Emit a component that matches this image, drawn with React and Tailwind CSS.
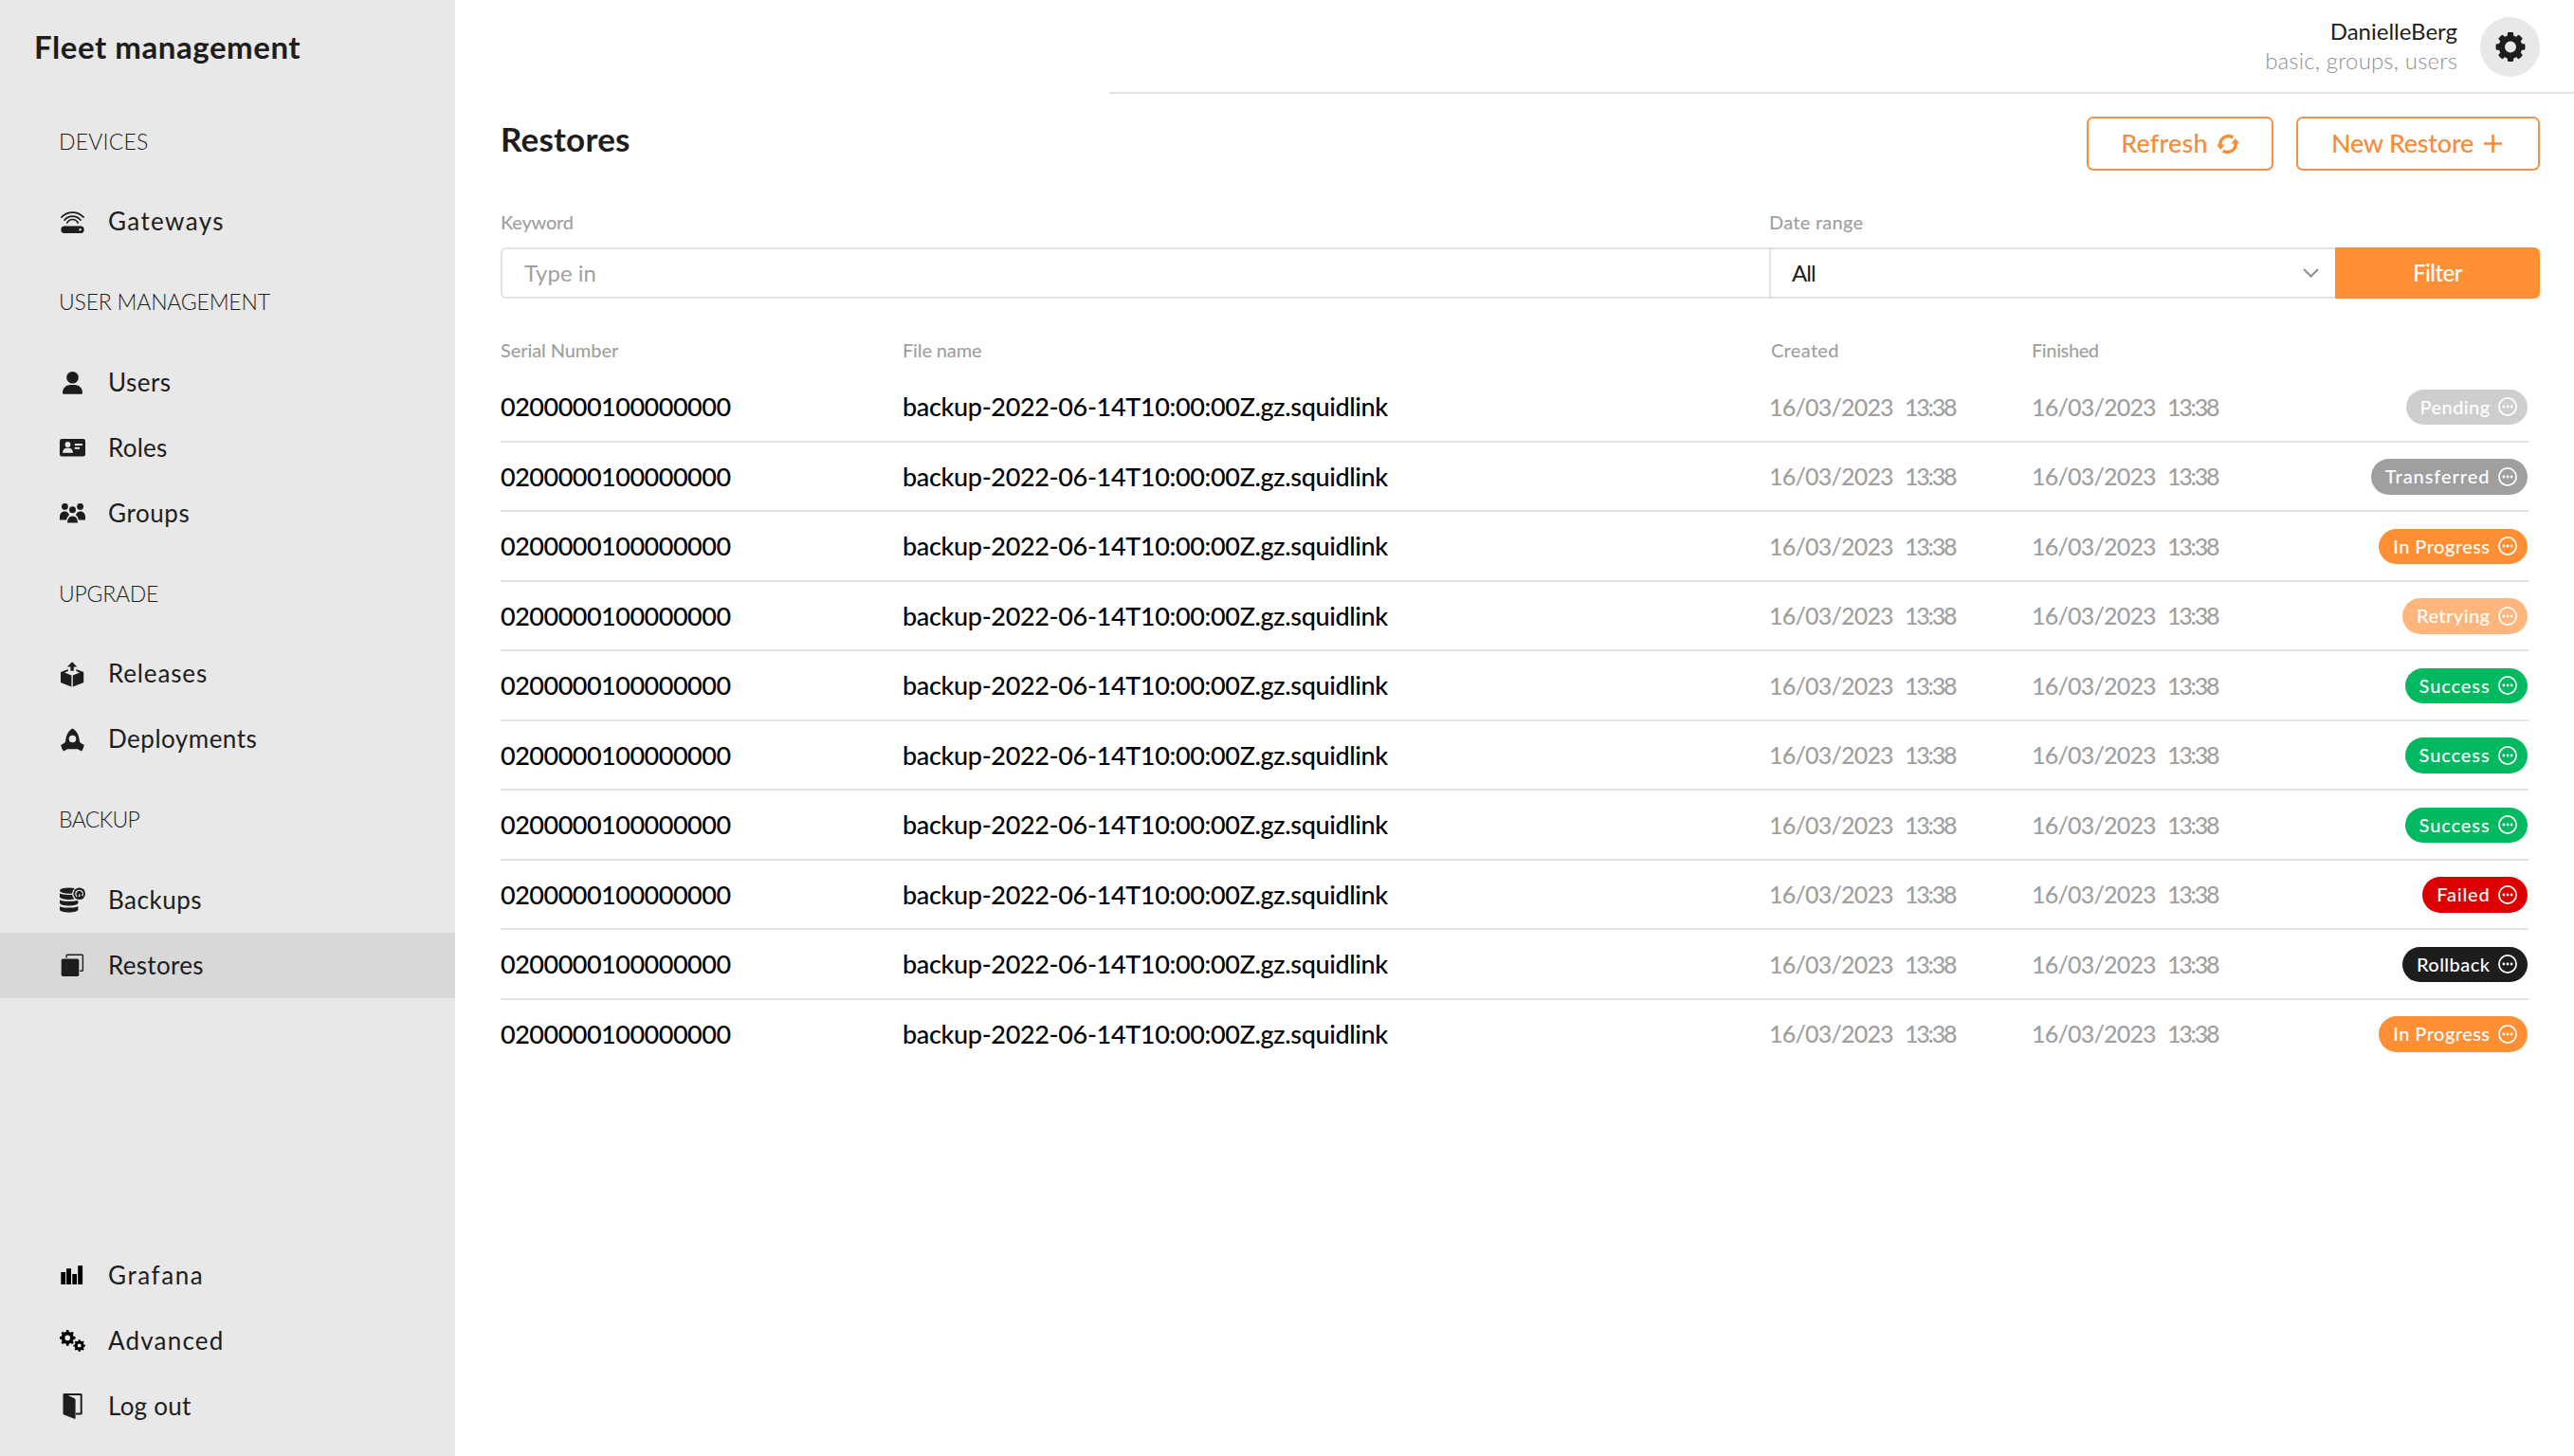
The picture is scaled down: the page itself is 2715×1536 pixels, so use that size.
import React from "react";
import clsx from "clsx";

function Icon({ children }) {
  return (
    <svg viewBox="0 0 27 27" className="h-[27px] w-[27px] shrink-0" fill="currentColor">
      {children}
    </svg>
  );
}

const ANGLES = [0, 45, 90, 135, 180, 225, 270, 315];

function Cog({ cx, cy, r, hole, tooth }) {
  const body = r * 0.8;
  return (
    <g>
      <circle cx={cx} cy={cy} r={(body + hole) / 2} fill="none" stroke="currentColor" strokeWidth={body - hole} />
      {ANGLES.map((a) => (
        <rect
          key={a}
          x={cx - tooth / 2}
          y={cy - r}
          width={tooth}
          height={r * 0.4}
          rx={tooth * 0.2}
          transform={`rotate(${a} ${cx} ${cy})`}
        />
      ))}
    </g>
  );
}

const GatewayIcon = () => (
  <Icon>
    <g fill="none" stroke="currentColor" strokeWidth="1.7" strokeLinecap="round">
      <path d="M1.9 8.2C8.2 1.4 18.8 1.4 25.1 8.2" />
      <path d="M4.9 11.2C9.6 5.7 17.4 5.7 22.1 11.2" />
      <path d="M7.8 14C10.4 9.3 16.6 9.3 19.2 14" />
    </g>
    <path
      fillRule="evenodd"
      d="M4.6 17.4h17.8a3.6 3.6 0 0 1 3.2 3.8 3.6 3.6 0 0 1-3.2 3.8H4.6a3.6 3.6 0 0 1-3.2-3.8 3.6 3.6 0 0 1 3.2-3.8Zm17 2.6a1.3 1.3 0 1 0 0 2.6 1.3 1.3 0 0 0 0-2.6Z"
    />
  </Icon>
);

const UserIcon = () => (
  <Icon>
    <circle cx="13.5" cy="8.2" r="6.3" />
    <path d="M3 24.6c0-5 3.6-8.5 8.2-8.5h4.6c4.6 0 8.2 3.5 8.2 8.5 0 .7-.4 1.2-1.1 1.2H4.1c-.7 0-1.1-.5-1.1-1.2Z" />
  </Icon>
);

const RolesIcon = () => (
  <Icon>
    <rect x="0" y="4" width="27" height="18.4" rx="2.2" />
    <g className="fill-[#e8e8e8]">
      <circle cx="8.5" cy="10" r="2.9" />
      <path d="M3 18.8c0-3 2-5 4-5h3c2 0 4 2 4 5Z" />
      <rect x="15.6" y="9" width="8.6" height="2" rx="0.8" />
      <rect x="15.6" y="12.7" width="5.6" height="2" rx="0.8" />
    </g>
  </Icon>
);

const GroupsIcon = () => (
  <Icon>
    <circle cx="5.4" cy="6.4" r="3.4" />
    <circle cx="21.6" cy="6.4" r="3.4" />
    <circle cx="13.5" cy="9.8" r="3.5" />
    <path d="M0 20.4V17c0-3.2 2.2-5.6 5-5.6 1.7 0 3 .6 3.9 1.6.4 1 .7 1.7 1.2 2.2-1.5 1.1-2.6 2.9-3 5.2Z" />
    <path d="M27 20.4V17c0-3.2-2.2-5.6-5-5.6-1.7 0-3 .6-3.9 1.6-.4 1-.7 1.7-1.2 2.2 1.5 1.1 2.6 2.9 3 5.2Z" />
    <path d="M8 23.6c0-4.4 2.2-7.2 5.5-7.2s5.5 2.8 5.5 7.2Z" />
  </Icon>
);

const ReleasesIcon = () => (
  <Icon>
    <path d="M13.1.3 18.3 5.5h-3.5v4.3h-3.4V5.5H7.9Z" />
    <path d="M1 10.9 8.8 7.9v2L5.2 11.4l7.2 3.2v12L1.5 22.3a.8.8 0 0 1-.5-.7Z" />
    <path d="M25.2 10.9 17.4 7.9v2l3.6 1.5-7.2 3.2v12l10.9-4.3a.8.8 0 0 0 .5-.7Z" />
  </Icon>
);

const RocketIcon = () => (
  <Icon>
    <path
      fillRule="evenodd"
      d="M13.5 1.4c4.6 2.6 6.8 7.2 7.3 12.8.1 2.1 1.5 3.2 4.9 4.6-.3 2.9-1.3 5-2.7 6.700L18.900 23.300H8.100L4 25.500C2.600 23.800 1.600 21.700 1.300 18.800c3.400-1.400 4.800-2.500 4.900-4.600C6.700 8.600 8.900 4 13.500 1.400Zm0 7.300a3.800 3.800 0 1 0 0 7.600 3.800 3.800 0 0 0 0-7.600Z"
    />
  </Icon>
);

const BackupsIcon = () => (
  <Icon>
    <ellipse cx="9.7" cy="3.6" rx="9.7" ry="3.2" />
    <path d="M0 6.3c2.5 2.2 16.9 2.2 19.4 0v3.6c0 4-19.4 4-19.4 0Z" />
    <path d="M0 13.2c2.5 2.2 16.9 2.2 19.4 0v3.3c0 4-19.4 4-19.4 0Z" />
    <path d="M0 19.9c2.5 2.2 16.9 2.2 19.4 0v3.6c0 4-19.4 4-19.4 0Z" />
    <circle cx="20.7" cy="6.8" r="7.6" className="fill-[#e8e8e8]" />
    <circle cx="20.7" cy="6.8" r="6.3" />
    <path d="M18.3 9.9A3.7 3.7 0 1 1 23.6 9.2M20.8 10V7.200" fill="none" className="stroke-[#e8e8e8]" strokeWidth="1.3" />
  </Icon>
);

const RestoresIcon = () => (
  <Icon>
    <rect x="1.7" y="6.5" width="18.6" height="18.5" rx="1.7" />
    <path
      d="M7.1 5.6V3.200c0-.6.3-.9.9-.9h15.500c.6 0 .9.3.9.9v15.100c0 .6-.3.9-.9.9h-2.200"
      fill="none"
      stroke="currentColor"
      strokeWidth="1.4"
    />
  </Icon>
);

const GrafanaIcon = () => (
  <Icon>
    <g className="fill-black">
      <rect x="1.3" y="10" width="4.8" height="13" />
      <rect x="7.1" y="6.2" width="4.9" height="16.8" />
      <rect x="13.3" y="12" width="4.7" height="11" />
      <rect x="19.2" y="3.2" width="4.9" height="19.8" />
    </g>
  </Icon>
);

const AdvancedIcon = () => (
  <Icon>
    <g className="fill-black text-black">
      <Cog cx={8.2} cy={10.4} r={8.3} hole={2.8} tooth={2.6} />
      <Cog cx={20.7} cy={18.6} r={6.3} hole={2} tooth={1.9} />
    </g>
  </Icon>
);

const LogoutIcon = () => (
  <Icon>
    <path d="M4.6 1h17.6c.3 0 .5.2.5.5v19.6c0 .3-.2.5-.5.5H17" fill="none" stroke="currentColor" strokeWidth="2" />
    <path d="M3.5 1.3C3.5.2 4.5 0 5.5.5L15.6 5.2c.7.4 1 .8 1 1.5v19.2c0 .8-.4 1.1-1.200.8L4.600 22.400c-.8-.3-1.100-.7-1.100-1.500Z" />
  </Icon>
);

const RefreshIcon = () => (
  <svg viewBox="0 0 24 22" className="h-[22px] w-6" fill="currentColor">
    <g fill="none" stroke="currentColor" strokeWidth="3.4">
      <path d="M17.3 4A8.7 8.7 0 0 0 3.900 12.200" />
      <path d="M6.700 18A8.700 8.700 0 0 0 20.100 9.800" />
    </g>
    <path d="M0 11.500h8.600L4.300 17ZM24 10.500h-8.600L19.700 5Z" />
  </svg>
);

const DotsIcon = () => (
  <svg viewBox="0 0 20 20" className="h-5 w-5" fill="currentColor">
    <circle cx="10" cy="10" r="9.1" fill="none" stroke="currentColor" strokeWidth="1.7" />
    <circle cx="5.9" cy="10" r="1.4" />
    <circle cx="10" cy="10" r="1.4" />
    <circle cx="14.1" cy="10" r="1.4" />
  </svg>
);

const SECTIONS = [
  {
    title: "DEVICES",
    tracking: "tracking-[0.2px]",
    items: [{ label: "Gateways", tracking: "tracking-[1.4px]", icon: GatewayIcon }],
  },
  {
    title: "USER MANAGEMENT",
    tracking: "tracking-[-0.2px]",
    items: [
      { label: "Users", tracking: "tracking-[0.5px]", icon: UserIcon },
      { label: "Roles", tracking: "tracking-[0.25px]", icon: RolesIcon },
      { label: "Groups", tracking: "tracking-[0.6px]", icon: GroupsIcon },
    ],
  },
  {
    title: "UPGRADE",
    tracking: "tracking-[-0.25px]",
    items: [
      { label: "Releases", tracking: "tracking-[0.85px]", icon: ReleasesIcon },
      { label: "Deployments", tracking: "tracking-[0.5px]", icon: RocketIcon },
    ],
  },
  {
    title: "BACKUP",
    tracking: "tracking-[-0.7px]",
    items: [
      { label: "Backups", tracking: "tracking-[0.5px]", icon: BackupsIcon },
      { label: "Restores", tracking: "tracking-[0.3px]", icon: RestoresIcon, active: true },
    ],
  },
];

const FOOTER = [
  { label: "Grafana", tracking: "tracking-[1.6px]", icon: GrafanaIcon },
  { label: "Advanced", tracking: "tracking-[1.2px]", icon: AdvancedIcon },
  { label: "Log out", tracking: "tracking-[0.25px]", icon: LogoutIcon },
];

const STATUS = {
  Pending: "bg-[#cecece] tracking-[0.4px]",
  Transferred: "bg-[#9f9f9f] tracking-[0.95px]",
  "In Progress": "bg-[#ff8f35] tracking-[0.45px]",
  Retrying: "bg-[#ffb57c] tracking-[0.45px]",
  Success: "bg-[#00b960] tracking-[0.9px]",
  Failed: "bg-[#dc0000] tracking-[0.8px]",
  Rollback: "bg-[#1d1d1d] tracking-[0.45px]",
};

const ROWS = [
  "Pending",
  "Transferred",
  "In Progress",
  "Retrying",
  "Success",
  "Success",
  "Success",
  "Failed",
  "Rollback",
  "In Progress",
];

function NavItem({ label, tracking, icon: ItemIcon, active }) {
  return (
    <a className={clsx("flex h-[69px] items-center gap-6 pl-[63px]", active && "bg-[#d8d8d8]")}>
      <ItemIcon />
      <span className={clsx("pb-0.5 text-[26px] leading-none whitespace-nowrap", tracking)}>{label}</span>
    </a>
  );
}

function Sidebar() {
  return (
    <aside className="flex w-[480px] shrink-0 flex-col bg-[#e8e8e8] pb-[18px]">
      <h1 className="flex h-[99px] items-center pl-[36px] text-[33px] leading-none font-bold tracking-[0.55px]">
        Fleet management
      </h1>
      {SECTIONS.map((s) => (
        <nav key={s.title}>
          <h2
            className={clsx(
              "flex h-[100.5px] items-center pl-[62px] text-[23px] leading-none font-light",
              s.tracking
            )}
          >
            {s.title}
          </h2>
          {s.items.map((item) => (
            <NavItem key={item.label} {...item} />
          ))}
        </nav>
      ))}
      <nav className="mt-auto">
        {FOOTER.map((item) => (
          <NavItem key={item.label} {...item} />
        ))}
      </nav>
    </aside>
  );
}

function Header() {
  return (
    <header className="flex h-[99px] flex-col">
      <div className="flex flex-1 items-center justify-end gap-6 pt-0.5 pr-9">
        <div className="pb-[3px] text-right text-2xl leading-[31px]">
          <div>DanielleBerg</div>
          <div className="font-light tracking-[0.15px] text-[#8f8f8f]">basic, groups, users</div>
        </div>
        <button className="flex h-[63px] w-[63px] items-center justify-center rounded-full bg-[#e8e8e8]">
          <svg viewBox="0 0 32 32" className="h-8 w-8" fill="currentColor">
            <Cog cx={16} cy={15.5} r={15.4} hole={6} tooth={6.4} />
          </svg>
        </button>
      </div>
      <div className="ml-[690px] h-0.5 bg-[#e2e2e2]" />
    </header>
  );
}

function Toolbar() {
  return (
    <div className="flex h-[57px] items-start">
      <h2 className="flex-1 text-[35px] leading-[47px] font-bold tracking-[0.2px]">Restores</h2>
      <div className="flex gap-6 text-[27px] leading-none font-medium text-[#f78c38]">
        <button className="flex h-[57px] w-[197px] items-center justify-center gap-[9px] rounded-[7px] border-2 border-[#f2924a]">
          <span className="pb-0.5 tracking-[0.2px]">Refresh</span>
          <RefreshIcon />
        </button>
        <button className="flex h-[57px] w-[257px] items-center justify-center gap-[11px] rounded-[7px] border-2 border-[#f2924a] pr-[3px]">
          <span className="pb-0.5 tracking-[-0.25px]">New Restore</span>
          <svg viewBox="0 0 19 19" className="h-[19px] w-[19px]" fill="none" stroke="currentColor" strokeWidth="2.6">
            <path d="M9.5 0v19M0 9.500h19" />
          </svg>
        </button>
      </div>
    </div>
  );
}

function Filters() {
  return (
    <div className="mt-[39px] grid grid-cols-[1338px_597px_216px]">
      <label className="mb-3 text-xl leading-[30px] font-medium tracking-[-0.25px] text-[#9f9f9f]">Keyword</label>
      <label className="mb-3 text-xl leading-[30px] font-medium tracking-[0.25px] text-[#9f9f9f]">Date range</label>
      <span />
      <div className="flex h-[54px] items-center rounded-l-[6px] border-2 border-r-0 border-[#e2e2e2] pb-px pl-[23px] text-2xl text-[#9f9f9f]">
        Type in
      </div>
      <div className="flex h-[54px] items-center justify-between border-2 border-r-0 border-[#e2e2e2] pr-[17px] pb-px pl-[22px] text-2xl tracking-[-0.9px]">
        All
        <svg viewBox="0 0 17 10" className="h-2.5 w-[17px]" fill="none" stroke="#8f8f8f" strokeWidth="2">
          <path d="M1 1l7.5 7.500L16 1" />
        </svg>
      </div>
      <button className="h-[54px] rounded-r-[6px] bg-[#ff8f35] pb-px text-2xl font-medium tracking-[-0.5px] text-white">
        Filter
      </button>
    </div>
  );
}

function DateCell() {
  return (
    <span className="flex text-[25px] text-[#9f9f9f]">
      <span className="w-[143px] tracking-[-0.8px]">16/03/2023</span>
      <span className="tracking-[-2.2px]">13:38</span>
    </span>
  );
}

function Table() {
  return (
    <div className="mt-[39px] w-[2139px]">
      <div className="mb-[9px] grid grid-cols-[424px_914px_277px_277px_1fr] text-xl leading-[30px] font-medium text-[#9f9f9f]">
        <span className="tracking-[-0.1px]">Serial Number</span>
        <span className="tracking-[-0.15px]">File name</span>
        <span className="pl-0.5 tracking-[0.3px]">Created</span>
        <span className="tracking-[-0.4px]">Finished</span>
      </div>
      {ROWS.map((status, i) => (
        <div
          key={i}
          className={clsx(
            "grid h-[73.5px] grid-cols-[424px_914px_277px_277px_1fr] items-center border-b-2 pt-px text-[27px] leading-none font-medium text-black",
            i === ROWS.length - 1 ? "border-transparent" : "border-[#e2e2e2]"
          )}
        >
          <span className="pb-px tracking-[-0.5px]">0200000100000000</span>
          <span className="pb-px tracking-[-0.35px]">backup-2022-06-14T10:00:00Z.gz.squidlink</span>
          <DateCell />
          <DateCell />
          <span
            className={clsx(
              "mr-[1.5px] flex h-[37.5px] items-center gap-2 justify-self-end rounded-full pr-[11px] pl-[15px] text-xl leading-none text-white",
              STATUS[status]
            )}
          >
            <span className="pb-px">{status}</span>
            <DotsIcon />
          </span>
        </div>
      ))}
    </div>
  );
}

export default function App() {
  return (
    <div className="flex h-[1536px] w-[2715px] overflow-hidden bg-white font-['Lato',sans-serif] text-[#1d1d1d]">
      <Sidebar />
      <div className="flex flex-1 flex-col">
        <Header />
        <main className="flex-1 pt-6 pr-9 pl-12">
          <Toolbar />
          <Filters />
          <Table />
        </main>
      </div>
    </div>
  );
}
